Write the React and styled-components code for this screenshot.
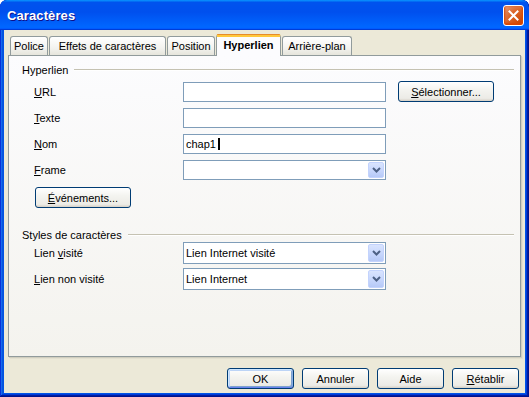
import React from 'react';
import styled, { createGlobalStyle, css } from 'styled-components';

const GlobalStyle = createGlobalStyle`
  html, body {
    margin: 0;
    padding: 0;
    background: #ffffff;
  }
  body {
    font-family: "Liberation Sans", Arial, sans-serif;
    font-size: 11px;
    color: #000;
  }
`;

const Window = styled.div`
  width: 529px;
  height: 397px;
  box-sizing: border-box;
  display: flex;
  flex-direction: column;
  border-radius: 7px 7px 0 0;
  background: #0055e5;
  box-shadow: inset -1px -1px #00138c, inset 1px 1px #0831d9,
    inset -2px -2px #001ea0, inset 2px 2px #166aee,
    inset -3px -3px #003bda, inset 3px 3px #0855dd;
  overflow: hidden;
`;

const TitleBar = styled.div`
  height: 30px;
  flex: none;
  display: flex;
  align-items: center;
  justify-content: space-between;
  padding: 0 5px 0 7px;
  border-radius: 7px 7px 0 0;
  background: linear-gradient(
    180deg,
    #0997ff,
    #0053ee 8%,
    #0050ee 40%,
    #0066ff 88%,
    #0066ff 93%,
    #005bff 95%,
    #003dd7 96%,
    #003dd7
  );
`;

const Title = styled.span`
  font-family: "Liberation Sans", Arial, sans-serif;
  font-weight: bold;
  font-size: 13px;
  color: #fff;
  text-shadow: 1px 1px #0f1089;
  letter-spacing: 0.1px;
`;

const CloseButton = styled.div`
  width: 21px;
  height: 21px;
  box-sizing: border-box;
  border: 1px solid #fff;
  border-radius: 3px;
  display: flex;
  align-items: center;
  justify-content: center;
  background: radial-gradient(circle at 90% 90%, #cc4600 0%, #dc6527 55%, #e5a284 100%);
  box-shadow: inset 0 -1px 2px 1px #da4600;
`;

const Client = styled.div`
  flex: 1;
  margin: 0 4px 4px;
  background: #ece9d8;
  display: flex;
  flex-direction: column;
  padding-top: 4px;
`;

const TabStrip = styled.div`
  height: 21px;
  display: flex;
  align-items: flex-end;
  padding-left: 6px;
`;

const Tab = styled.div`
  width: ${(p) => p.$w}px;
  height: 19px;
  box-sizing: border-box;
  margin-right: 1px;
  display: flex;
  align-items: center;
  justify-content: center;
  border: 1px solid #919b9c;
  border-bottom: none;
  border-radius: 3px 3px 0 0;
  background: linear-gradient(180deg, #ffffff 0%, #f3f3ef 60%, #e6e5dc 100%);
  white-space: nowrap;
  ${(p) =>
    p.$active &&
    css`
      height: 22px;
      margin-bottom: -1px;
      position: relative;
      z-index: 1;
      font-weight: bold;
      background: #fcfcfe;
      border-top: 3px solid #ffc83c;
      box-shadow: inset 0 1px 0 -1px #e68b2c;
      padding-bottom: 3px;
      &::before {
        content: '';
        position: absolute;
        left: 0;
        right: 0;
        top: -3px;
        height: 1px;
        background: #e68b2c;
        border-radius: 2px 2px 0 0;
      }
    `}
`;

const Panel = styled.div`
  height: 302px;
  box-sizing: border-box;
  margin: 0 4px;
  border: 1px solid #919b9c;
  background: linear-gradient(180deg, #fcfcfe 0%, #f4f3ee 100%);
  box-shadow: 1px 1px 0 #d0cebf, 2px 2px 0 #e3e0d0;
  padding: 7px 6px 0 13px;
`;

const Section = styled.div`
  display: flex;
  flex-direction: column;
  margin-top: ${(p) => p.$top || 0}px;
`;

const Legend = styled.div`
  display: flex;
  align-items: center;
  height: 13px;
  white-space: nowrap;
  &::after {
    content: '';
    flex: 1;
    margin-left: 6px;
    height: 0;
    border-top: 1px solid #c5c2b2;
    border-bottom: 1px solid #ffffff;
  }
`;

const FieldGrid = styled.div`
  display: grid;
  grid-template-columns: 149px 203px auto;
  row-gap: ${(p) => p.$gap}px;
  align-items: center;
  margin: ${(p) => p.$top}px 0 0 12px;
`;

const Label = styled.span`
  white-space: nowrap;
`;

const Key = styled.span`
  text-decoration: underline;
`;

const TextBox = styled.div`
  height: 20px;
  box-sizing: border-box;
  border: 1px solid #7f9db9;
  background: #fff;
  display: flex;
  align-items: center;
  padding-left: 2px;
`;

const Caret = styled.span`
  width: 2px;
  height: 12px;
  margin-left: 2px;
  background: #000;
`;

const Combo = styled.div`
  height: ${(p) => p.$h}px;
  box-sizing: border-box;
  border: 1px solid #7f9db9;
  background: #fff;
  display: flex;
  align-items: center;
  justify-content: space-between;
  padding: 0 1px 0 2px;
`;

const DropButton = styled.div`
  width: 16px;
  height: ${(p) => p.$h}px;
  box-sizing: border-box;
  border-radius: 2px;
  border: 1px solid #c3d3fd;
  background: linear-gradient(180deg, #d9e4fe 0%, #c5d5fc 60%, #b6c9f7 100%);
  display: flex;
  align-items: center;
  justify-content: center;
`;

const Button = styled.div`
  width: ${(p) => p.$w}px;
  height: 21px;
  box-sizing: border-box;
  border: 1px solid #003c74;
  border-radius: 3px;
  background: linear-gradient(180deg, #ffffff 0%, #f4f4f0 40%, #ecebe6 86%, #d6d0c5 100%);
  display: flex;
  align-items: center;
  justify-content: center;
  white-space: nowrap;
  margin-left: ${(p) => p.$ml || 0}px;
  ${(p) =>
    p.$default &&
    css`
      box-shadow: inset 0 -1px #6982ee, inset 1px 1px #cee7ff, inset -1px 0 #89ade4,
        inset 0 2px #bcd4f6, inset 2px 0 #bcd4f6, inset -2px -2px #7da2ce;
    `}
`;

const EventButtonCell = styled.div`
  grid-column: 1 / 3;
  margin: 1px 0 0 1px;
`;

const ButtonRow = styled.div`
  display: flex;
  justify-content: flex-end;
  gap: 8px;
  margin-top: 11px;
  padding-right: 6px;
`;

const Chevron = () => (
  <svg width="9" height="6" viewBox="0 0 9 6">
    <path d="M1 1 L4.5 4.5 L8 1" fill="none" stroke="#4d6185" strokeWidth="2" />
  </svg>
);

const ComboField = ({ h, children }) => (
  <Combo $h={h}>
    <span>{children}</span>
    <DropButton $h={h - 4}>
      <Chevron />
    </DropButton>
  </Combo>
);

const tabs = [
  { label: 'Police', w: 38 },
  { label: 'Effets de caractères', w: 117 },
  { label: 'Position', w: 48 },
  { label: 'Hyperlien', w: 65, active: true },
  { label: 'Arrière-plan', w: 70 },
];

export default function App() {
  return (
    <>
      <GlobalStyle />
      <Window>
        <TitleBar>
          <Title>Caractères</Title>
          <CloseButton>
            <svg width="11" height="11" viewBox="0 0 11 11">
              <path d="M1.5 1.5 L9.5 9.5 M9.5 1.5 L1.5 9.5" stroke="#fff" strokeWidth="2" strokeLinecap="square" />
            </svg>
          </CloseButton>
        </TitleBar>
        <Client>
          <TabStrip>
            {tabs.map((t) => (
              <Tab key={t.label} $w={t.w} $active={t.active}>
                {t.label}
              </Tab>
            ))}
          </TabStrip>
          <Panel>
            <Section>
              <Legend>Hyperlien</Legend>
              <FieldGrid $gap={6} $top={5}>
                <Label>
                  <Key>U</Key>RL
                </Label>
                <TextBox />
                <Button $w={96} $ml={12}>
                  <span>
                    <Key>S</Key>électionner...
                  </span>
                </Button>

                <Label>
                  <Key>T</Key>exte
                </Label>
                <TextBox />
                <span />

                <Label>
                  <Key>N</Key>om
                </Label>
                <TextBox>
                  chap1
                  <Caret />
                </TextBox>
                <span />

                <Label>
                  <Key>F</Key>rame
                </Label>
                <ComboField h={20} />
                <span />

                <EventButtonCell>
                  <Button $w={96}>
                    <span>
                      <Key>É</Key>vénements...
                    </span>
                  </Button>
                </EventButtonCell>
              </FieldGrid>
            </Section>

            <Section $top={20}>
              <Legend>Styles de caractères</Legend>
              <FieldGrid $gap={4} $top={1}>
                <Label>
                  Lien <Key>v</Key>isité
                </Label>
                <ComboField h={22}>Lien Internet visité</ComboField>
                <span />

                <Label>
                  <Key>L</Key>ien non visité
                </Label>
                <ComboField h={22}>Lien Internet</ComboField>
                <span />
              </FieldGrid>
            </Section>
          </Panel>
          <ButtonRow>
            <Button $w={67} $default>
              OK
            </Button>
            <Button $w={67}>Annuler</Button>
            <Button $w={67}>Aide</Button>
            <Button $w={67}>
              <span>
                <Key>R</Key>établir
              </span>
            </Button>
          </ButtonRow>
        </Client>
      </Window>
    </>
  );
}
